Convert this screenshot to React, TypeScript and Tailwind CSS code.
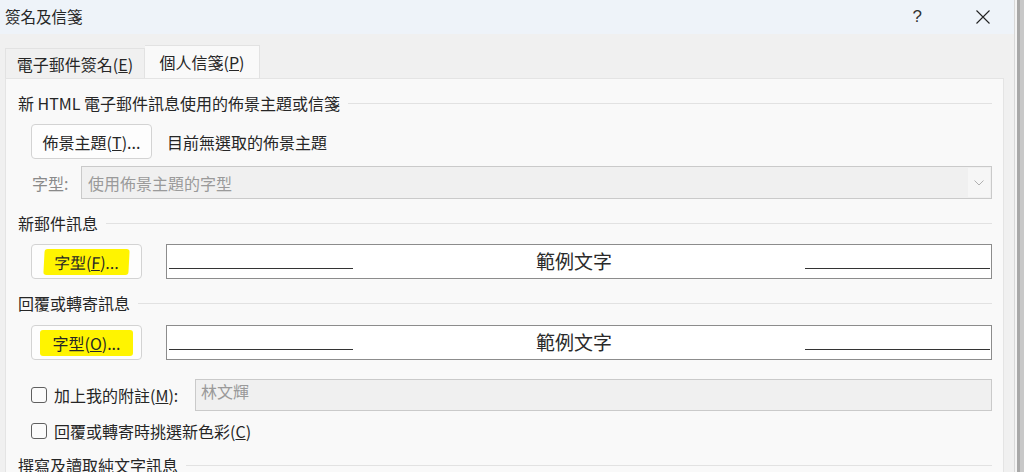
import React from 'react'

const font = { fontFamily: '"Noto Sans CJK TC", "Noto Sans", sans-serif' }

function SectionHeader({ title }: { title: string }) {
  return (
    <div className="flex items-center h-[22px] pr-[11px]">
      <span className="text-[16px] text-[#262626] whitespace-nowrap">{title}</span>
      <div className="flex-1 h-px bg-[#e2e2e2] ml-[8px]" />
    </div>
  )
}

function Btn({ children, w }: { children: React.ReactNode; w: string }) {
  return (
    <div
      className={`${w} h-[35px] flex items-center justify-center rounded-[4px] border border-[#d3d3d3] bg-[#fdfdfd] text-[16px] text-[#262626]`}
    >
      {children}
    </div>
  )
}

function Preview() {
  return (
    <div className="flex-1 h-[35px] bg-white border border-[#8c8c8c] flex items-center relative mr-[11px]">
      <div className="absolute left-[2px] bottom-[9px] w-[184px] h-px bg-[#333]" />
      <div className="absolute right-[1px] bottom-[9px] w-[185px] h-px bg-[#333]" />
      <span className="w-full text-center text-[19px] text-[#2a2a2a] pr-[10px]">範例文字</span>
    </div>
  )
}

function Checkbox() {
  return <div className="w-[16px] h-[16px] rounded-[3px] border border-[#606060] bg-[#fbfbfb] shrink-0" />
}

export default function App() {
  return (
    <div className="w-[1024px] h-[472px] overflow-hidden flex bg-[#f0f0f0]" style={font}>
      <div className="w-[1014px] flex flex-col">
        {/* title bar */}
        <div className="h-[34px] bg-[#eef3f9] flex items-center shrink-0">
          <span className="ml-[5px] text-[15.5px] text-[#262626]">簽名及信箋</span>
          <div className="flex-1" />
          <span className="text-[17px] text-[#333] mr-[53px]" style={{ fontFamily: '"Liberation Sans", sans-serif' }}>?</span>
          <svg width="16" height="16" viewBox="0 0 16 16" className="mr-[23px]">
            <path d="M1.5 1.5 L14.5 14.5 M14.5 1.5 L1.5 14.5" stroke="#222" strokeWidth="1.1" fill="none" />
          </svg>
        </div>

        {/* tabs */}
        <div className="flex items-end h-[44px] pl-[5px] shrink-0">
          <div className="h-[30px] w-[140px] flex items-center justify-center bg-[#f0f0f0] border border-b-0 border-[#e2e2e2] text-[16px] text-[#262626]">
            電子郵件簽名(<u>E</u>)
          </div>
          <div className="h-[33px] w-[115px] flex items-center justify-center bg-[#f9f9f9] border border-b-0 border-l-0 border-[#e2e2e2] text-[16px] text-[#262626]">
            個人信箋(<u>P</u>)
          </div>
        </div>

        {/* panel */}
        <div className="flex-1 ml-[5px] mr-[10px] bg-[#f9f9f9] border border-[#e4e4e4] pl-[12px] pt-[13px]">
          <SectionHeader title="新 HTML 電子郵件訊息使用的佈景主題或信箋" />

          <div className="flex items-center mt-[10px] pl-[13px]">
            <Btn w="w-[121px]">
              佈景主題(<u>T</u>)...
            </Btn>
            <span className="ml-[15px] text-[16px] text-[#262626]">目前無選取的佈景主題</span>
          </div>

          <div className="flex items-center mt-[7px] pl-[14px] pr-[11px]">
            <span className="w-[49px] text-[16px] text-[#8a8a8a]">字型:</span>
            <div className="flex-1 h-[33px] bg-[#f0f0f0] border border-[#cacaca] flex items-center">
              <span className="ml-[6px] text-[16px] text-[#9a9a9a] flex-1">使用佈景主題的字型</span>
              <div className="w-[22px] h-[29px] bg-[#f6f6f6] flex items-center justify-center mr-[1px]">
                <svg width="10" height="6" viewBox="0 0 10 6">
                  <path d="M0.5 0.5 L5 5 L9.5 0.5" stroke="#b0b0b0" strokeWidth="1" fill="none" />
                </svg>
              </div>
            </div>
          </div>

          <div className="mt-[13px]">
            <SectionHeader title="新郵件訊息" />
          </div>
          <div className="flex items-center mt-[10px] pl-[13px]">
            <Btn w="w-[111px]">
              <span className="bg-[#fff400] px-[10px] py-[1px] rounded-[3px] -skew-x-3">
                字型(<u>F</u>)...
              </span>
            </Btn>
            <div className="w-[24px]" />
            <Preview />
          </div>

          <div className="mt-[13px]">
            <SectionHeader title="回覆或轉寄訊息" />
          </div>
          <div className="flex items-center mt-[11px] pl-[13px]">
            <Btn w="w-[111px]">
              <span className="bg-[#fff400] px-[12px] py-[1px] rounded-[3px]">
                字型(<u>O</u>)...
              </span>
            </Btn>
            <div className="w-[24px]" />
            <Preview />
          </div>

          <div className="flex items-center mt-[19px] pl-[13px] pr-[11px]">
            <Checkbox />
            <span className="ml-[7px] w-[141px] text-[16px] text-[#262626] whitespace-nowrap">
              加上我的附註(<u>M</u>):
            </span>
            <div className="flex-1 h-[32px] bg-[#f0f0f0] border border-[#cacaca] flex items-center">
              <span className="ml-[5px] text-[16px] text-[#9a9a9a] -mt-[8px]">林文輝</span>
            </div>
          </div>

          <div className="flex items-center mt-[8px] pl-[13px]">
            <Checkbox />
            <span className="ml-[7px] text-[16px] text-[#262626]">
              回覆或轉寄時挑選新色彩(<u>C</u>)
            </span>
          </div>

          <div className="mt-[11px]">
            <SectionHeader title="撰寫及讀取純文字訊息" />
          </div>
        </div>
      </div>

      {/* window behind, right edge */}
      <div className="w-[10px] flex">
        <div className="w-[1px] bg-[#d8d8d8]" />
        <div className="w-[2px] bg-[#f4f4f4]" />
        <div className="w-[3px] bg-[#a8a8a8]" />
        <div className="w-[4px] bg-[#c8c8c8]" />
      </div>
    </div>
  )
}
